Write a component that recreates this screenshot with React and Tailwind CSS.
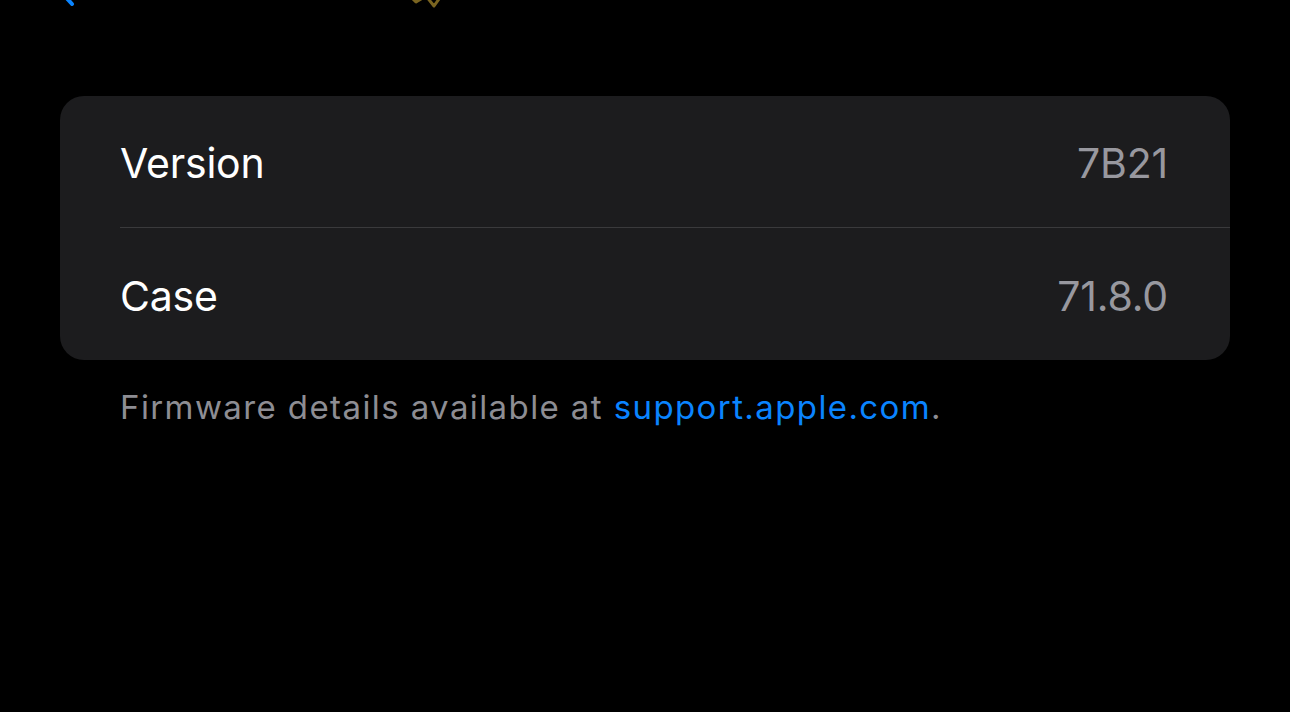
export default function App() {
  const rows = [
    { label: 'Version', value: '7B21' },
    { label: 'Case', value: '71.8.0' },
  ];

  return (
    <div
      className="w-[1290px] h-[712px] bg-black overflow-hidden relative"
      style={{ fontFamily: 'Inter, "Noto Sans", sans-serif' }}
    >
      {/* cut-off nav bar remnants */}
      <div className="h-[96px] relative">
        <svg className="absolute left-[58px] top-[-20px]" width="20" height="26" viewBox="0 0 20 26">
          <path d="M14 2 L4 13 L14 24" fill="none" stroke="#0a84ff" strokeWidth="4" strokeLinecap="round" strokeLinejoin="round" />
        </svg>
        <svg className="absolute left-[398px] top-[-14px]" width="52" height="22" viewBox="0 0 52 22">
          <path d="M6 4 L18 16 L28 10 L36 20 L46 6" fill="none" stroke="#7a6420" strokeWidth="3" strokeLinecap="round" strokeLinejoin="round" />
        </svg>
      </div>

      <div className="mx-[60px] w-[1170px] rounded-[24px] bg-[#1c1c1e] pl-[60px] overflow-hidden">
        {rows.map((r, i) => (
          <div
            key={r.label}
            className={`h-[132px] pt-[5px] flex items-center justify-between pr-[62px] ${i === 0 ? 'border-b border-[#3a3a3c]' : ''}`}
          >
            <span className="text-[41px] text-white tracking-[-0.2px]">{r.label}</span>
            <span className="text-[41px] text-[#98989f] tracking-[-0.2px]">{r.value}</span>
          </div>
        ))}
      </div>

      <p className="mt-[23px] pl-[120px] text-[33px] tracking-[1.4px] text-[#8d8d93]">
        Firmware details available at <span className="text-[#0a84ff]">support.apple.com</span>.
      </p>
    </div>
  );
}
